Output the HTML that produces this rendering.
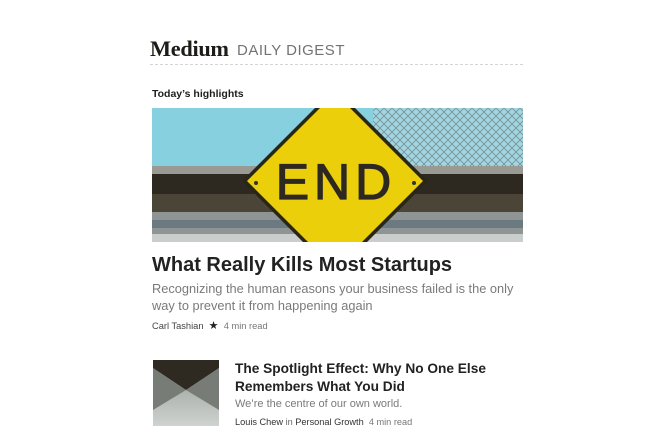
<!DOCTYPE html>
<html><head><meta charset="utf-8"><style>
body{margin:0;width:652px;height:448px;background:#fff;position:relative;overflow:hidden;font-family:"Liberation Sans",sans-serif}
.a{position:absolute;white-space:nowrap}
</style></head><body>
<div class="a" style="left:150px;top:36px;font-family:'Liberation Serif',serif;font-weight:bold;font-size:22.3px;color:#1e1c17;letter-spacing:-0.3px">Medium</div>
<div class="a" style="left:237px;top:42px;font-size:15px;color:#737373;letter-spacing:0.5px">DAILY DIGEST</div>
<div class="a" style="left:150px;top:64px;width:373px;border-top:1px dashed #d4d4d4"></div>
<div class="a" style="left:152px;top:88px;font-size:10.5px;font-weight:bold;color:#1e1e1e">Today’s highlights</div>
<svg class="a" style="left:152px;top:108px" width="371" height="134" viewBox="0 0 371 134">
<defs>
<pattern id="f" width="8" height="8" patternUnits="userSpaceOnUse"><path d="M0 0L8 8M8 0L0 8" stroke="#7a8e92" stroke-width="0.8"/></pattern>
<clipPath id="c"><rect width="371" height="134"/></clipPath>
</defs>
<g clip-path="url(#c)">
<rect width="371" height="134" fill="#87d0df"/>
<rect x="221" y="0" width="150" height="60" fill="#9fd6e2"/>
<rect x="221" y="0" width="150" height="60" fill="url(#f)"/>
<rect y="58" width="371" height="9" fill="#9a9a94"/>
<rect y="66" width="371" height="40" fill="#2d2820"/>
<rect y="86" width="371" height="20" fill="#4a4536"/>
<rect y="104" width="371" height="30" fill="#8e9594"/>
<rect y="112" width="371" height="8" fill="#6a7a80"/>
<rect y="126" width="371" height="8" fill="#c9cdcc"/>
<rect x="175" y="0" width="6" height="30" fill="#2d2820"/>
<polygon points="183,-20 276,73 183,166 90,73" fill="#2a2616"/>
<polygon points="183,-15 271,73 183,161 95,73" fill="#ebcf0b"/>
<text x="184" y="91" text-anchor="middle" font-family="Liberation Sans,sans-serif" font-size="50" fill="#2d2820" stroke="#2d2820" stroke-width="1.2" letter-spacing="5">END</text>
<circle cx="104" cy="75" r="2" fill="#333"/><circle cx="262" cy="75" r="2" fill="#333"/>
</g></svg>
<div class="a" style="left:152px;top:254px;font-size:20px;font-weight:bold;color:#222">What Really Kills Most Startups</div>
<div class="a" style="left:152px;top:280px;font-size:12.8px;color:#7a7a7a;line-height:17px">Recognizing the human reasons your business failed is the only<br>way to prevent it from happening again</div>
<div class="a" style="left:152px;top:319px;font-size:9.3px;color:#444">Carl Tashian &nbsp;<span style="color:#222;font-size:11px">★</span> &nbsp;<span style="color:#777">4 min read</span></div>
<svg class="a" style="left:153px;top:360px" width="66" height="66">
<defs><linearGradient id="g" x1="0" y1="0" x2="0" y2="1"><stop offset="0" stop-color="#8e9692"/><stop offset="1" stop-color="#cfd3cf"/></linearGradient></defs>
<rect width="66" height="66" fill="url(#g)"/>
<polygon points="0,0 66,0 66,8 33,30 0,8" fill="#2e2a22"/>
<polygon points="0,8 33,30 0,50" fill="#777d76"/>
<polygon points="66,8 33,30 66,50" fill="#777d76"/>
</svg>
<div class="a" style="left:235px;top:360px;font-size:13.7px;font-weight:bold;color:#222;line-height:18px">The Spotlight Effect: Why No One Else<br>Remembers What You Did</div>
<div class="a" style="left:235px;top:398px;font-size:11px;color:#7a7a7a">We’re the centre of our own world.</div>
<div class="a" style="left:235px;top:417px;font-size:9.2px;color:#333">Louis Chew <span style="color:#666">in</span> Personal Growth &nbsp;<span style="color:#777">4 min read</span></div>
</body></html>
